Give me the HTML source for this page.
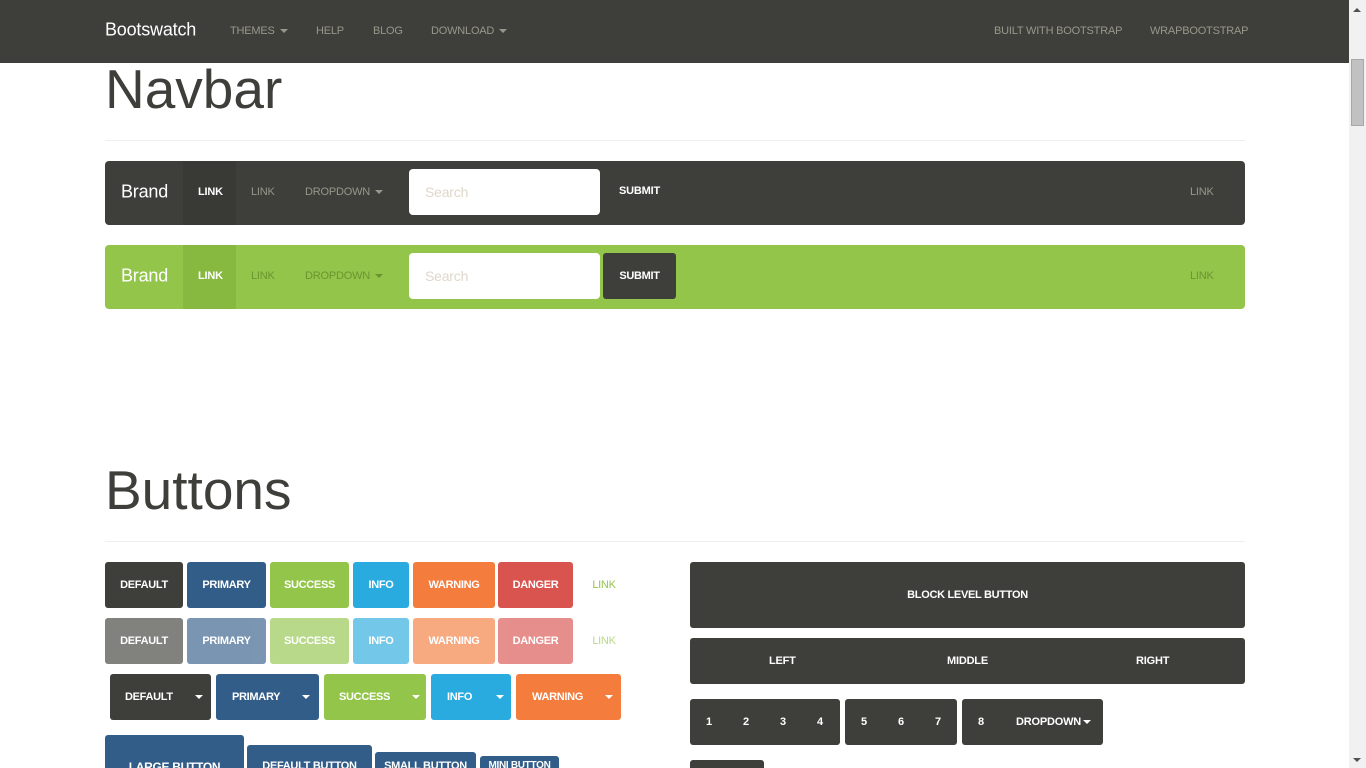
<!DOCTYPE html>
<html style="width:1366px;height:768px;overflow:hidden"><head><meta charset="utf-8"><style>
*{box-sizing:border-box;margin:0;padding:0}
body{width:1366px;height:768px;overflow:hidden;background:#fff;font-family:"Liberation Sans",Arial,sans-serif;position:relative}
.a{position:absolute}
.b{position:absolute;display:flex;align-items:center;justify-content:center;color:#fff;font-size:11px;font-weight:bold;border-radius:3px;white-space:nowrap;letter-spacing:-0.3px}
.t{position:absolute;font-size:11px;white-space:nowrap;transform:translateY(-50%);letter-spacing:-0.2px}
.car{display:inline-block;width:0;height:0;border-left:4px solid transparent;border-right:4px solid transparent;border-top:4px solid currentColor;vertical-align:middle;margin-left:5px}
.d{background:#3e3f3a}.p{background:#325d88}.s{background:#93c54b}.i{background:#29abe0}.w{background:#f47c3c}.r{background:#d9534f}
h1{position:absolute;font-weight:normal;color:#3e3f3a;font-size:55px;left:105px}
hr{position:absolute;left:105px;width:1140px;border:0;border-top:1px solid #eee}
</style></head><body>
<div class="a" style="left:0;top:0;width:1349px;height:63px;background:#3e3f3a"></div>
<div class="t" style="left:105px;top:30px;color:#fff;font-size:18px">Bootswatch</div>
<div class="t" style="left:230px;top:31px;color:#98978b">THEMES<span class="car"></span></div>
<div class="t" style="left:316px;top:31px;color:#98978b">HELP</div>
<div class="t" style="left:373px;top:31px;color:#98978b">BLOG</div>
<div class="t" style="left:431px;top:31px;color:#98978b">DOWNLOAD<span class="car"></span></div>
<div class="t" style="left:994px;top:31px;color:#98978b">BUILT WITH BOOTSTRAP</div>
<div class="t" style="left:1150px;top:31px;color:#98978b">WRAPBOOTSTRAP</div>
<div class="a" style="left:1349px;top:0;width:17px;height:768px;background:#f1f1f1"></div>
<div class="a" style="left:1351px;top:59px;width:13px;height:67px;background:#c1c1c1;border:1px solid #a8a8a8"></div>
<div class="a" style="left:1353px;top:8px;width:0;height:0;border-left:4px solid transparent;border-right:4px solid transparent;border-bottom:4px solid #505050"></div>
<div class="a" style="left:1353px;top:758px;width:0;height:0;border-left:4px solid transparent;border-right:4px solid transparent;border-top:4px solid #505050"></div>

<h1 style="top:57px">Navbar</h1>
<hr style="top:140px">
<div class="a d" style="left:105px;top:161px;width:1140px;height:64px;border-radius:4px"></div>
<div class="a" style="left:183px;top:161px;width:53px;height:64px;background:#393a35"></div>
<div class="t" style="left:121px;top:192px;color:#fff;font-size:18px">Brand</div>
<div class="t" style="left:198px;top:192px;color:#fff;font-weight:bold">LINK</div>
<div class="t" style="left:251px;top:192px;color:#98978b">LINK</div>
<div class="t" style="left:305px;top:192px;color:#98978b">DROPDOWN<span class="car"></span></div>
<div class="a" style="left:409px;top:169px;width:191px;height:46px;background:#fff;border-radius:4px"></div>
<div class="t" style="left:425px;top:192px;color:#dfd7ca;font-size:14px">Search</div>
<div class="t" style="left:619px;top:191px;color:#fff;font-weight:bold">SUBMIT</div>
<div class="t" style="left:1190px;top:192px;color:#98978b">LINK</div>
<div class="a s" style="left:105px;top:245px;width:1140px;height:64px;border-radius:4px"></div>
<div class="a" style="left:183px;top:245px;width:53px;height:64px;background:#87b83f"></div>
<div class="t" style="left:121px;top:276px;color:#fff;font-size:18px">Brand</div>
<div class="t" style="left:198px;top:276px;color:#fff;font-weight:bold">LINK</div>
<div class="t" style="left:251px;top:276px;color:#6b9430">LINK</div>
<div class="t" style="left:305px;top:276px;color:#6b9430">DROPDOWN<span class="car"></span></div>
<div class="a" style="left:409px;top:253px;width:191px;height:46px;background:#fff;border-radius:4px"></div>
<div class="t" style="left:425px;top:276px;color:#dfd7ca;font-size:14px">Search</div>
<div class="b d" style="left:603px;top:253px;width:73px;height:46px">SUBMIT</div>
<div class="t" style="left:1190px;top:276px;color:#6b9430">LINK</div>

<h1 style="top:458px">Buttons</h1>
<hr style="top:541px">
<div class="b d" style="left:105px;top:562px;width:78px;height:46px">DEFAULT</div>
<div class="b p" style="left:187px;top:562px;width:79px;height:46px">PRIMARY</div>
<div class="b s" style="left:270px;top:562px;width:79px;height:46px">SUCCESS</div>
<div class="b i" style="left:353px;top:562px;width:56px;height:46px">INFO</div>
<div class="b w" style="left:413px;top:562px;width:82px;height:46px">WARNING</div>
<div class="b r" style="left:498px;top:562px;width:75px;height:46px">DANGER</div>
<div class="b" style="left:578px;top:562px;width:52px;height:46px;color:#93c54b;font-weight:normal">LINK</div>
<div class="b d" style="left:105px;top:618px;width:78px;height:46px;opacity:.65">DEFAULT</div>
<div class="b p" style="left:187px;top:618px;width:79px;height:46px;opacity:.65">PRIMARY</div>
<div class="b s" style="left:270px;top:618px;width:79px;height:46px;opacity:.65">SUCCESS</div>
<div class="b i" style="left:353px;top:618px;width:56px;height:46px;opacity:.65">INFO</div>
<div class="b w" style="left:413px;top:618px;width:82px;height:46px;opacity:.65">WARNING</div>
<div class="b r" style="left:498px;top:618px;width:75px;height:46px;opacity:.65">DANGER</div>
<div class="b" style="left:578px;top:618px;width:52px;height:46px;color:#93c54b;opacity:.65;font-weight:normal">LINK</div>
<div class="b d" style="left:110px;top:674px;width:101px;height:46px;justify-content:flex-start;padding-left:15px">DEFAULT<span class="car" style="margin-left:22px"></span></div>
<div class="b p" style="left:216px;top:674px;width:103px;height:46px;justify-content:flex-start;padding-left:16px">PRIMARY<span class="car" style="margin-left:22px"></span></div>
<div class="b s" style="left:324px;top:674px;width:102px;height:46px;justify-content:flex-start;padding-left:15px">SUCCESS<span class="car" style="margin-left:22px"></span></div>
<div class="b i" style="left:431px;top:674px;width:80px;height:46px;justify-content:flex-start;padding-left:16px">INFO<span class="car" style="margin-left:24px"></span></div>
<div class="b w" style="left:516px;top:674px;width:105px;height:46px;justify-content:flex-start;padding-left:16px">WARNING<span class="car" style="margin-left:22px"></span></div>
<div class="b p" style="left:105px;top:735px;width:139px;height:60px;font-size:12px;align-items:flex-start;padding-top:25px">LARGE BUTTON</div>
<div class="b p" style="left:247px;top:745px;width:125px;height:46px;align-items:flex-start;padding-top:15px">DEFAULT BUTTON</div>
<div class="b p" style="left:375px;top:752px;width:101px;height:36px;align-items:flex-start;padding-top:8px">SMALL BUTTON</div>
<div class="b p" style="left:480px;top:756px;width:79px;height:30px;font-size:10px;align-items:flex-start;padding-top:4px">MINI BUTTON</div>
<div class="b d" style="left:690px;top:562px;width:555px;height:66px">BLOCK LEVEL BUTTON</div>
<div class="a d" style="left:690px;top:638px;width:555px;height:46px;border-radius:3px"></div>
<div class="t" style="left:769px;top:661px;color:#fff;font-weight:bold">LEFT</div>
<div class="t" style="left:947px;top:661px;color:#fff;font-weight:bold">MIDDLE</div>
<div class="t" style="left:1136px;top:661px;color:#fff;font-weight:bold">RIGHT</div>
<div class="a d" style="left:690px;top:699px;width:150px;height:46px;border-radius:3px"></div>
<div class="t" style="left:706px;top:722px;color:#fff;font-weight:bold">1</div>
<div class="t" style="left:743px;top:722px;color:#fff;font-weight:bold">2</div>
<div class="t" style="left:780px;top:722px;color:#fff;font-weight:bold">3</div>
<div class="t" style="left:817px;top:722px;color:#fff;font-weight:bold">4</div>
<div class="a d" style="left:845px;top:699px;width:112px;height:46px;border-radius:3px"></div>
<div class="t" style="left:861px;top:722px;color:#fff;font-weight:bold">5</div>
<div class="t" style="left:898px;top:722px;color:#fff;font-weight:bold">6</div>
<div class="t" style="left:935px;top:722px;color:#fff;font-weight:bold">7</div>
<div class="a d" style="left:962px;top:699px;width:141px;height:46px;border-radius:3px"></div>
<div class="t" style="left:978px;top:722px;color:#fff;font-weight:bold">8</div>
<div class="t" style="left:1016px;top:722px;color:#fff;font-weight:bold">DROPDOWN<span class="car" style="margin-left:2px"></span></div>
<div class="a d" style="left:690px;top:760px;width:74px;height:30px;border-radius:3px"></div>
</body></html>
